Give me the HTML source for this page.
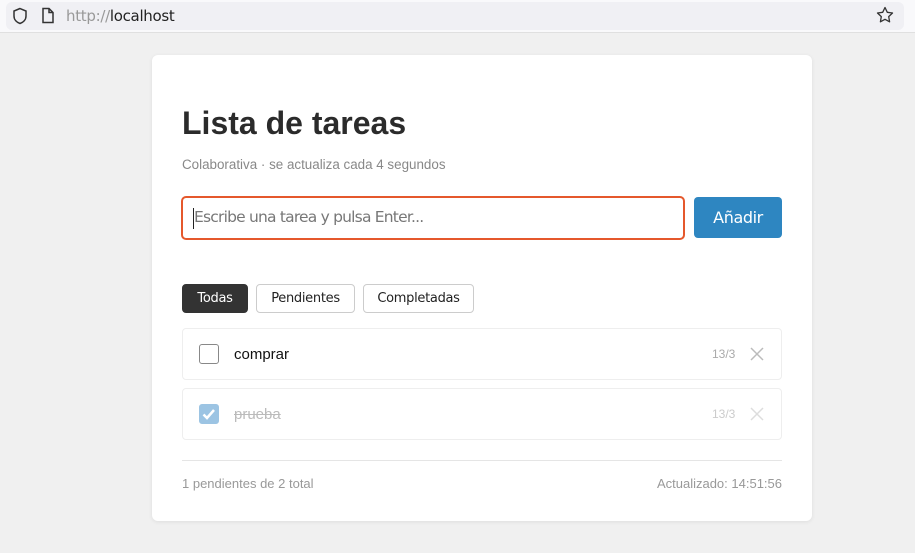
<!DOCTYPE html>
<html><head><meta charset="utf-8"><style>
*{box-sizing:border-box;margin:0;padding:0}
body{width:915px;height:553px;background:#f0f0f0;font-family:"Liberation Sans",sans-serif;position:relative;overflow:hidden}
.bar{position:absolute;left:0;top:0;width:915px;height:33px;background:#f9f9fb;border-bottom:1px solid #e0e0e0}
.url{position:absolute;left:6px;top:2px;width:898px;height:28px;background:#f0f0f4;border-radius:6px}
.urltext{position:absolute;left:66px;top:7px;font-size:15px;color:#999;font-family:"DejaVu Sans",sans-serif;letter-spacing:-0.3px}
.urltext b{color:#222;font-weight:normal}
.card{position:absolute;left:152px;top:55px;width:660px;height:466px;background:#fff;border-radius:6px;box-shadow:0 1px 4px rgba(0,0,0,.08)}
h1{position:absolute;left:30px;top:50px;font-size:32px;color:#2b2b2b;font-weight:bold}
.sub{position:absolute;left:30px;top:102px;font-size:13.4px;color:#888}
.inp{position:absolute;left:29px;top:141px;width:504px;height:44px;border:2px solid #e5582c;border-radius:5px;font-family:"DejaVu Sans",sans-serif;font-size:15.5px;color:#777;padding:10px 0 0 11px;letter-spacing:-0.8px}
.inp:before{content:"";position:absolute;left:10px;top:10px;width:1px;height:21px;background:#222}
.btn{position:absolute;left:542px;top:142px;width:88px;height:41px;background:#2e86c1;border-radius:4px;color:#fff;font-size:16px;text-align:center;line-height:41px;font-family:"DejaVu Sans",sans-serif;letter-spacing:-0.4px}
.f{position:absolute;top:229px;height:29px;border:1px solid #ccc;border-radius:4px;font-size:13px;font-family:"DejaVu Sans",sans-serif;text-align:center;line-height:28px;color:#222;letter-spacing:-0.3px}
.row{position:absolute;left:30px;width:600px;height:52px;border:1px solid #eee;border-radius:4px}
.cb{position:absolute;left:16px;top:15px;width:20px;height:20px;border:1px solid #888;border-radius:3px}
.t{position:absolute;left:51px;top:17px;font-size:15px;color:#111}
.d{position:absolute;left:529px;top:18px;font-size:12px;color:#aaa}
.x{position:absolute;left:567px;top:18px}
.foot{position:absolute;left:30px;top:405px;width:600px;border-top:1px solid #e5e5e5}
.fl{position:absolute;left:30px;top:421px;font-size:13px;color:#999}
.fr{position:absolute;right:30px;top:421px;font-size:13px;color:#999}
</style></head><body>
<div class="bar"><div class="url"></div>
<svg style="position:absolute;left:12px;top:7px" width="16" height="18" viewBox="0 0 16 18"><path d="M8 1.5L2 4v5c0 4 3 6.5 6 7.5 3-1 6-3.5 6-7.5V4z" fill="none" stroke="#333" stroke-width="1.5"/></svg>
<svg style="position:absolute;left:41px;top:7px" width="14" height="17" viewBox="0 0 14 17"><path d="M2 1.5h6l4 4v10H2z M8 1.5v4h4" fill="none" stroke="#333" stroke-width="1.5"/></svg>
<div class="urltext">http://<b>localhost</b></div>
<svg style="position:absolute;left:876px;top:6px" width="18" height="18" viewBox="0 0 18 18"><path d="M9 1.5l2.3 4.8 5.2.7-3.8 3.6.9 5.2L9 13.3l-4.6 2.5.9-5.2L1.5 7l5.2-.7z" fill="none" stroke="#333" stroke-width="1.3" stroke-linejoin="round"/></svg>
</div>
<div class="card">
<h1>Lista de tareas</h1>
<div class="sub">Colaborativa · se actualiza cada 4 segundos</div>
<div class="inp">Escribe una tarea y pulsa Enter...</div>
<div class="btn">Añadir</div>
<div class="f" style="left:30px;width:66px;background:#333;color:#fff;border-color:#333">Todas</div>
<div class="f" style="left:104px;width:99px">Pendientes</div>
<div class="f" style="left:211px;width:111px">Completadas</div>
<div class="row" style="top:273px"><div class="cb"></div><div class="t">comprar</div><div class="d">13/3</div>
<svg class="x" width="14" height="14" viewBox="0 0 14 14"><path d="M1 1l12 12M13 1L1 13" stroke="#bbb" stroke-width="1.5"/></svg></div>
<div class="row" style="top:333px"><div class="cb" style="background:#9cc4e3;border-color:#9cc4e3"><svg width="18" height="18" viewBox="0 0 18 18"><path d="M3.5 9.5l3.5 3.5 7-8" fill="none" stroke="#fff" stroke-width="2.5"/></svg></div><div class="t" style="color:#bbb;text-decoration:line-through">prueba</div><div class="d" style="color:#ccc">13/3</div>
<svg class="x" width="14" height="14" viewBox="0 0 14 14"><path d="M1 1l12 12M13 1L1 13" stroke="#ddd" stroke-width="1.5"/></svg></div>
<div class="foot"></div>
<div class="fl">1 pendientes de 2 total</div>
<div class="fr">Actualizado: 14:51:56</div>
</div>
</body></html>
